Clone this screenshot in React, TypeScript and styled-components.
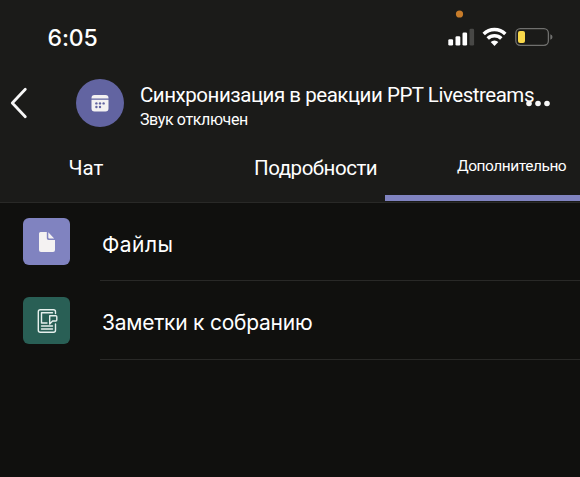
import React from "react";
import styled, { createGlobalStyle } from "styled-components";

const GlobalStyle = createGlobalStyle`
  * { box-sizing: border-box; }
  body { margin: 0; background: #10100e; }
`;

const Screen = styled.main`
  width: 580px;
  height: 477px;
  overflow: hidden;
  background: #10100e;
  color: #fff;
  font-family: Roboto, "Liberation Sans", sans-serif;
  white-space: nowrap;
`;

const Header = styled.header`
  display: flex;
  flex-direction: column;
  height: 203px;
  background: #1b1b19;
  border-bottom: 1px solid #292927;
`;

const StatusBar = styled.div`
  display: flex;
  justify-content: space-between;
  height: 72px;
  padding-left: 47px;
`;

const Clock = styled.time`
  padding: 24px 0 0 0.5px;
  font: 550 23px/28px Inter, sans-serif;
  letter-spacing: -0.1px;
`;

const StatusIcons = styled.svg`
  display: block;
  width: 140px;
  height: 60px;
`;

const TitleBar = styled.div`
  display: flex;
  height: 64px;
`;

const BackButton = styled.button`
  width: 76px;
  height: 64px;
  padding: 0;
  border: 0;
  background: none;
  svg { display: block; }
`;

const Avatar = styled.div`
  display: grid;
  place-items: center;
  width: 48px;
  height: 48px;
  margin-top: 7px;
  border-radius: 50%;
  background: #6264a1;
`;

const Meeting = styled.div`
  width: 386px;
  margin-left: 16px;
  padding-top: 11px;
`;

const Title = styled.h1`
  margin: 0;
  font-size: 20.5px;
  font-weight: 400;
  line-height: 25px;
  letter-spacing: -0.47px;
`;

const Subtitle = styled.p`
  margin: 1px 0 0;
  font-size: 16px;
  line-height: 22px;
  letter-spacing: -0.38px;
`;

const MoreButton = styled.button`
  width: 26px;
  height: 10px;
  margin-top: 27px;
  padding: 0;
  border: 0;
  background: none;
  svg { display: block; }
`;

const Tabs = styled.nav`
  display: grid;
  grid-template-columns: 193px 192px 195px;
  height: 66px;
`;

const Tab = styled.div<{ $inset: number; $tracking?: number; $active?: boolean }>`
  padding: ${p => (p.$active ? 18 : 20)}px 0 0 ${p => p.$inset}px;
  height: 65px;
  font-size: ${p => (p.$active ? 15.5 : 20.5)}px;
  line-height: 24px;
  letter-spacing: ${p => p.$tracking ?? 0}px;
  border-bottom: 6px solid ${p => (p.$active ? "#8083c0" : "transparent")};
`;

const List = styled.ul`
  margin: 0;
  padding: 0;
  list-style: none;
`;

const Item = styled.li`
  display: flex;
  height: 78px;
  padding-left: 23px;
  & + & { height: 79px; }
`;

const Tile = styled.div<{ $color: string }>`
  width: 47px;
  height: 47px;
  margin-top: 15px;
  border-radius: 6px;
  background: ${p => p.$color};
  svg { display: block; }
  ${Item} + ${Item} & { margin-top: 16px; }
`;

const Label = styled.div<{ $tracking: number }>`
  flex: 1;
  margin-left: 30px;
  padding: 28px 0 0 2px;
  border-bottom: 1px solid #292927;
  font: 400 21px/28px Inter, sans-serif;
  letter-spacing: ${p => p.$tracking}px;
`;

const CalendarIcon = () => (
  <svg width="48" height="48" viewBox="0 0 48 48">
    <path fill="#f4f2f2" d="M18.5 16h11a3 3 0 0 1 3 3v.5h-17V19a3 3 0 0 1 3-3zM15.5 20.8h17v8.7a3 3 0 0 1-3 3h-11a3 3 0 0 1-3-3z" />
    <g fill="#6264a1">
      <circle cx="20.4" cy="24.4" r="1.2" />
      <circle cx="24" cy="24.4" r="1.2" />
      <circle cx="27.6" cy="24.4" r="1.2" />
      <circle cx="20.4" cy="28" r="1.2" />
      <circle cx="24" cy="28" r="1.2" />
    </g>
  </svg>
);

const FileIcon = () => (
  <svg width="47" height="47" viewBox="0 0 47 47">
    <path fill="#f4f2f2" d="M17.5 14h6.3v6.3a1.8 1.8 0 0 0 1.8 1.8H32v10a2 2 0 0 1-2 2H18a2 2 0 0 1-2-2V15.5A1.5 1.5 0 0 1 17.5 14zM25.3 14.3l5.9 6.2h-5a.9.9 0 0 1-.9-.9z" />
  </svg>
);

const NotesIcon = () => (
  <svg width="47" height="47" viewBox="0 0 47 47" fill="none" stroke="#e6f0ed" strokeWidth="1.4" strokeLinejoin="round" strokeLinecap="round">
    <path d="M32.5 16.5v-1.7a2 2 0 0 0-2-2H17.3a2 2 0 0 0-2 2v18.4a2 2 0 0 0 2 2h13.200a2 2 0 0 0 2-2V27" />
    <path d="M29.500 15.800H18.500v10.200h5.500M18.500 29h11M18.500 32h11" />
    <path d="M26.700 18.700h6.100a1 1 0 0 1 1 1v3.300a1 1 0 0 1-1 1h-3.200l-2.900 3z" />
  </svg>
);

export default function App() {
  return (
    <Screen>
      <GlobalStyle />
      <Header>
        <StatusBar>
          <Clock>6:05</Clock>
          <StatusIcons viewBox="440 0 140 60">
            <circle cx="459.5" cy="14" r="3.6" fill="#c77c2a" />
            <g fill="#fff">
              <rect x="448.3" y="39.3" width="4.8" height="6.2" rx="1.3" />
              <rect x="455.5" y="36.2" width="4.8" height="9.3" rx="1.3" />
              <rect x="462.5" y="32.5" width="4.6" height="13" rx="1.3" />
              <rect x="469.5" y="28.7" width="4.6" height="16.8" rx="1.3" fill="#484846" />
            </g>
            <g fill="none" stroke="#fff" strokeWidth="3.5">
              <path d="M483.7 33.900a15.500 15.500 0 0 1 21.600 0" />
              <path d="M487.700 38.500a9.800 9.800 0 0 1 13.600 0" />
            </g>
            <path fill="#fff" d="M490.700 42a5.400 5.400 0 0 1 7.600 0l-3.800 4z" />
            <rect x="515.8" y="28.700" width="32.600" height="16.600" rx="4.500" fill="none" stroke="#70706e" strokeWidth="1.300" />
            <rect x="518" y="31" width="7" height="12" rx="2" fill="#f9d84a" />
            <path d="M550.300 34.300q2.200 .5 2.200 2.700t-2.200 2.700z" fill="#70706e" />
          </StatusIcons>
        </StatusBar>
        <TitleBar>
          <BackButton aria-label="Назад">
            <svg width="76" height="64" viewBox="0 72 76 64">
              <path d="M25.300 89.300L12.300 103l13 13.700" fill="none" stroke="#f7f7f7" strokeWidth="2.800" strokeLinecap="round" strokeLinejoin="round" />
            </svg>
          </BackButton>
          <Avatar><CalendarIcon /></Avatar>
          <Meeting>
            <Title>Синхронизация в реакции PPT Livestreams</Title>
            <Subtitle>Звук отключен</Subtitle>
          </Meeting>
          <MoreButton aria-label="Ещё">
            <svg width="26" height="10" viewBox="526 99 26 10" fill="#f7f7f7">
              <circle cx="529" cy="103.500" r="2.800" />
              <circle cx="538" cy="103.500" r="2.800" />
              <circle cx="547" cy="103.500" r="2.800" />
            </svg>
          </MoreButton>
        </TitleBar>
        <Tabs>
          <Tab $inset={68.500}>Чат</Tab>
          <Tab $inset={61} $tracking={-0.46}>Подробности</Tab>
          <Tab $inset={72} $tracking={-0.46} $active>Дополнительно</Tab>
        </Tabs>
      </Header>
      <List>
        <Item>
          <Tile $color="#8083c0"><FileIcon /></Tile>
          <Label $tracking={0.45}>Файлы</Label>
        </Item>
        <Item>
          <Tile $color="#295f55"><NotesIcon /></Tile>
          <Label $tracking={-0.24}>Заметки к собранию</Label>
        </Item>
      </List>
    </Screen>
  );
}
